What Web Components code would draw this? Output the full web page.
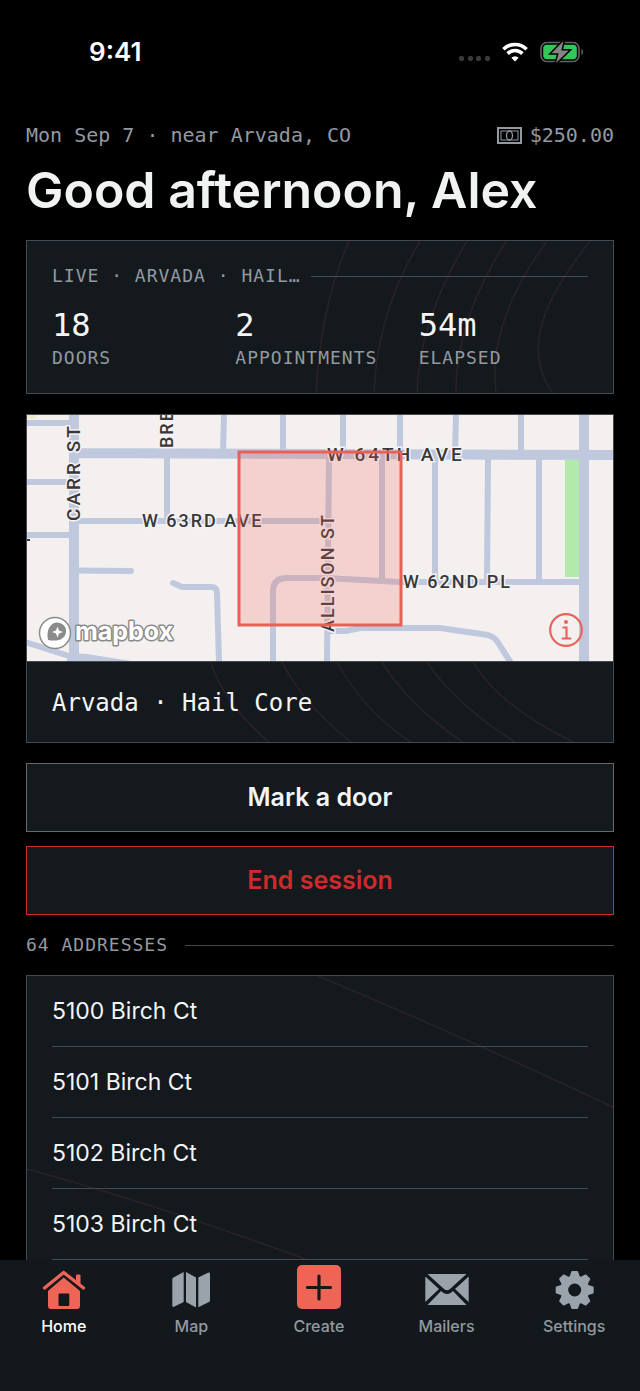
<!DOCTYPE html>
<html lang="en">
<head>
<meta charset="utf-8">
<meta name="viewport" content="width=device-width, initial-scale=1">
<title>Home</title>
<style>
    :root {
        --bg: #000;
        --panel: #14191d;
        --line: #434b50;
        --contour: #2b2226;
        --fg: #f3f5f6;
        --muted: #9299a0;
        --accent: #ee6558;
        --danger: #cd2b2b;
        --sans: Inter, "Liberation Sans", sans-serif;
        --mono: "DejaVu Sans Mono", "Liberation Mono", monospace;
    }

    body {
        margin: 0;
        background: var(--bg);
        color: var(--fg);
        font-family: var(--sans);
    }
</style>
</head>
<body>
<field-app></field-app>

<script>
class StatusBar extends HTMLElement {
    constructor() {
        super();
        this.attachShadow({ mode: 'open' });
        this.shadowRoot.innerHTML = `
            <style>
                :host {
                    display: flex;
                    align-items: center;
                    justify-content: space-between;
                    height: 104px;
                    padding: 0 56px 0 89px;
                    color: #fff;
                }
                time { font-size: 26px; line-height: 32px; font-weight: 600; }
                .icons { display: flex; align-items: center; gap: 12px; }
                svg { display: block; }
            </style>
            <time>${this.getAttribute('time')}</time>
            <div class="icons">
                <svg width="31" height="22" viewBox="0 0 31 22" fill="#3b3b3c">
                    <rect x="0" y="15" width="5" height="5" rx="2"/>
                    <rect x="9" y="15" width="5" height="5" rx="2"/>
                    <rect x="17" y="15" width="5" height="5" rx="2"/>
                    <rect x="26" y="15" width="5" height="5" rx="2"/>
                </svg>
                <svg width="26" height="22" viewBox="0 0 26 22" fill="none" stroke="#fff" stroke-width="3.6">
                    <path d="M1.4 8.2a16.5 16.5 0 0 1 23.2 0"/>
                    <path d="M5.6 12.6a10.5 10.5 0 0 1 14.8 0"/>
                    <path d="M13 20.6l-3.7-3.8a5.2 5.2 0 0 1 7.4 0z" fill="#fff" stroke="none"/>
                </svg>
                <svg width="44" height="22" viewBox="0 0 44 22">
                    <rect x="1" y="1.5" width="38" height="19" rx="6" fill="none" stroke="#626365" stroke-width="1.6"/>
                    <path d="M41.5 8c2 .6 2 5.4 0 6z" fill="#626365"/>
                    <rect x="3.2" y="3.8" width="33.6" height="14.4" rx="3.6" fill="#33c759"/>
                    <path d="M23.5 0L11.5 12.2h7.2L16 22l12.8-12.4h-7.5z" fill="#858587" stroke="#000" stroke-width="3" paint-order="stroke"/>
                </svg>
            </div>
        `;
    }
}

class PageGreeting extends HTMLElement {
    constructor() {
        super();
        this.attachShadow({ mode: 'open' });
        this.shadowRoot.innerHTML = `
            <style>
                :host { display: block; }
                .meta {
                    display: flex;
                    justify-content: space-between;
                    font: 20px/24px var(--mono);
                    color: var(--muted);
                }
                .balance { display: flex; align-items: center; gap: 8px; }
                h1 { margin: 11px 0 0; font-size: 50px; line-height: 64px; font-weight: 600; color: #f1f2f2; }
            </style>
            <div class="meta">
                <slot name="where"></slot>
                <span class="balance">
                    <svg width="25" height="17" viewBox="0 0 25 17" fill="none" stroke="currentColor">
                        <rect x="1" y="1" width="23" height="15" stroke-width="2"/>
                        <rect x="4" y="4" width="17" height="9" stroke-width="1"/>
                        <ellipse cx="12.5" cy="8.5" rx="3" ry="4.5" stroke-width="1.3"/>
                    </svg>
                    <slot name="balance"></slot>
                </span>
            </div>
            <h1><slot></slot></h1>
        `;
    }
}

// Monospace caption followed by a hairline
class RuleLabel extends HTMLElement {
    constructor() {
        super();
        this.attachShadow({ mode: 'open' });
        this.shadowRoot.innerHTML = `
            <style>
                :host {
                    display: flex;
                    align-items: center;
                    gap: var(--rule-gap, 10px);
                    font: 18px/20px var(--mono);
                    letter-spacing: 1px;
                    color: var(--muted);
                    white-space: nowrap;
                }
                :host::after { content: ""; flex: 1; height: 1px; background: var(--line); }
            </style>
            <slot></slot>
        `;
    }
}

class StatItem extends HTMLElement {
    constructor() {
        super();
        this.attachShadow({ mode: 'open' });
        this.shadowRoot.innerHTML = `
            <style>
                :host { display: flex; flex-direction: column; font-family: var(--mono); }
                b { font-size: 32px; line-height: 40px; font-weight: 400; }
                span { font-size: 18px; line-height: 26px; letter-spacing: 1px; color: var(--muted); }
            </style>
            <b>${this.getAttribute('value')}</b>
            <span><slot></slot></span>
        `;
    }
}

// Bordered card with faint contour lines behind its content
const CONTOURS = {
    stats: {
        box: '0 0 586 152',
        d: 'M322 0Q294 64 289 152M393 0Q350 72 347 152M440 0Q392 80 390 152M479 0Q428 82 429 152M520 0Q460 82 469 152M563 0C522 52 492 106 526 152'
    },
    place: {
        box: '0 0 586 80',
        d: 'M183 0Q200 45 242 80M255 0Q276 42 324 80M310 0Q336 48 383 80M355 0Q382 44 436 80M400 0Q428 42 488 80M446 0Q472 44 546 80'
    },
    list: {
        box: '0 0 586 284',
        d: 'M291 0Q430 58 586 131M0 193Q134 230 281 284'
    }
};

class ContourCard extends HTMLElement {
    constructor() {
        super();
        this.attachShadow({ mode: 'open' });
        const lines = CONTOURS[this.getAttribute('lines')];
        this.shadowRoot.innerHTML = `
            <style>
                :host { display: block; background: var(--panel); border: 1px solid var(--line); }
                .body { display: grid; }
                .body > * { grid-area: 1 / 1; min-width: 0; }
                svg { width: 100%; height: 100%; }
                path { fill: none; stroke: var(--contour); stroke-width: 1.5; }
                .content { z-index: 1; }
            </style>
            <slot name="media"></slot>
            <div class="body">
                <svg viewBox="${lines.box}" preserveAspectRatio="none" aria-hidden="true"><path d="${lines.d}"/></svg>
                <div class="content"><slot></slot></div>
            </div>
        `;
    }
}

class StreetMap extends HTMLElement {
    constructor() {
        super();
        this.attachShadow({ mode: 'open' });
        this.shadowRoot.innerHTML = `
            <style>
                :host { display: block; position: relative; border-bottom: 1px solid var(--line); background: #f3f0ef; }
                .streets { display: block; width: 100%; }
                .road { fill: none; stroke: #bfc8dc; stroke-width: 6; stroke-linejoin: round; }
                .main { stroke-width: 10; }
                text { font-family: Roboto, sans-serif; font-size: 18px; font-weight: 500; letter-spacing: 2px; fill: #38383a; stroke: #f5f3f3; stroke-width: 3px; paint-order: stroke; }
                .major { font-size: 19px; letter-spacing: 3px; }
                .logo, button { position: absolute; bottom: 14px; }
                .logo { left: 11px; bottom: 8px; }
                .logo svg, button svg { display: block; }
                .logo text { font-family: Inter, sans-serif; font-size: 25px; font-weight: 700; letter-spacing: 0; fill: #fff; stroke: #8b8b8b; stroke-width: 3px; stroke-linejoin: round; }
                button { right: 30px; padding: 0; border: 0; background: none; }
            </style>
            <svg class="streets" viewBox="0 0 586 246" role="img" aria-label="Map of the session area">
                <rect x="538" y="45" width="14" height="117" fill="#b1eaab"/>
                <path fill="#f0eccb" d="M0 0h9v4H0z"/>
                <g class="road">
                    <path d="M0 8h46M0 67h46M0 120h46M140 38v68M197 0l-1 38M256 0v38M46 106h255"/>
                    <path d="M46 155.5L104 156M146 168l9 4h29q6 0 6 6l2 68" stroke-linecap="round"/>
                    <path d="M246 246v-70q0-13 14-13h38l75 4h179"/>
                    <path d="M302 43l-2 203M316 0v38M373 0v38M429 0l-1 38M494 0v38M355 43v124M408 43v124M461 43l-1 124M512 43v124"/>
                    <path d="M302 216h17l14-3h80l48 7q6 2 9 6l14 22"/>
                    <path d="M-2 227l47 15"/>
                    <path d="M40 238l20 1 44 7H40z" fill="#bfc8dc" stroke="none"/>
                </g>
                <g class="road main">
                    <path d="M47 0v246M46 38l254 1 286 1"/>
                    <path d="M557 0v246"/>
                </g>
                <g>
                    <text class="major" x="300" y="46">W 64TH AVE</text>
                    <text x="115" y="112">W 63RD AVE</text>
                    <text x="376" y="173">W 62ND PL</text>
                    <text class="major" transform="translate(53 106) rotate(-90)">CARR ST</text>
                    <text transform="translate(146 33) rotate(-90)">BRE</text>
                    <text transform="translate(307 217) rotate(-90)">ALLISON ST</text>
                    <path d="M0 125h3" stroke="#38383a" stroke-width="2"/>
                </g>
                <rect x="212" y="37" width="162" height="173" fill="#f2645a" fill-opacity=".22" stroke="#ea5f56" stroke-width="3"/>
            </svg>
            <div class="logo">
                <svg width="140" height="40" viewBox="0 0 140 40">
                    <circle cx="17" cy="20" r="15.5" fill="#fff" stroke="#8b8b8b" stroke-width="1.5"/>
                    <path d="M10 27c-1-6-.5-10.5 2-13.5a8.7 8.7 0 1 1 12 12c-3 2.3-8 2.5-14 1.5z" fill="#8b8b8b"/>
                    <path d="M19.5 13.5l1.5 4 4 1.5-4 1.5-1.5 4-1.5-4-4-1.5 4-1.5z" fill="#fff"/>
                    <text x="37" y="27">mapbox</text>
                </svg>
            </div>
            <button aria-label="Map information">
                <svg width="34" height="34" viewBox="0 0 34 34" fill="none" stroke="#e8645b" stroke-width="2.2">
                    <circle cx="17" cy="17" r="15.8"/>
                    <path d="M13.5 14.5H17.5V25.5M12.8 25.5h9.4"/>
                    <circle cx="17" cy="9" r="2" fill="#e8645b" stroke="none"/>
                </svg>
            </button>
        `;
    }
}

class ActionButton extends HTMLElement {
    constructor() {
        super();
        this.attachShadow({ mode: 'open' });
        this.shadowRoot.innerHTML = `
            <style>
                :host { display: block; }
                button {
                    display: block;
                    width: 100%;
                    padding: 18px;
                    border: 1px solid #626a6d;
                    background: var(--panel);
                    color: var(--fg);
                    font: 600 25px/31px var(--sans);
                }
                :host([danger]) button { border-color: var(--danger); color: var(--danger); }
            </style>
            <button><slot></slot></button>
        `;
    }
}

class AddressRow extends HTMLElement {
    constructor() {
        super();
        this.attachShadow({ mode: 'open' });
        this.shadowRoot.innerHTML = `
            <style>
                :host {
                    display: block;
                    padding: 19px 0;
                    border-bottom: 1px solid var(--line);
                    font-size: 23px;
                    line-height: 32px;
                }
            </style>
            <slot></slot>
        `;
    }
}

const TAB_ICONS = {
    home: `
        <path d="M34 18v-7.5q0-1 1-1h2.5q1 0 1 1V22z"/>
        <path d="M2.5 23L21.7 7.5 41.5 23" fill="none" stroke="currentColor" stroke-width="3.4" stroke-linecap="round" stroke-linejoin="round"/>
        <path fill-rule="evenodd" d="M21.7 12.5L38 26v15q0 3-3 3H9q-3 0-3-3V26zM17.5 28.5q-1 0-1 1V40q0 1 1 1h8.8q1 0 1-1V29.5q0-1-1-1z"/>`,
    map: `
        <path d="M14.7 7v30L5 41.8q-1.7.5-1.7-1.3V14.3q0-1.3 1.2-1.9z"/>
        <path d="M17 7l10 5.5v30L17 37z"/>
        <path d="M29.3 12.5L39.5 7.6q1.5-.5 1.5 1.2v26.5q0 1.2-1 1.7l-10.7 5.2z"/>`,
    create: `
        <rect width="44" height="44" rx="5"/>
        <path d="M22 11v23M10.5 22.5h23" fill="none" stroke="#14191d" stroke-width="3.2" stroke-linecap="round"/>`,
    mail: `
        <path d="M2.5 9h39L25 24q-3 2.5-6 0z"/>
        <path d="M.3 11.5L14 24 .3 37zM43.7 11.5L30 24l13.7 13z"/>
        <path d="M2.5 40L16 26l2.5 2q3.5 2 7 0l2.5-2 13.5 14z"/>`,
    gear: `
        <g transform="translate(22.7 25)" stroke="currentColor" stroke-linejoin="round">
            <circle r="10.5" fill="none" stroke-width="8"/>
            ${[0, 45, 90, 135, 180, 225, 270, 315].map(angle =>
                `<path transform="rotate(${angle})" stroke-width="2" d="M-4-13.5L-2.5-18h5L4-13.5z"/>`
            ).join('')}
        </g>`
};

class TabItem extends HTMLElement {
    constructor() {
        super();
        this.attachShadow({ mode: 'open' });
        this.shadowRoot.innerHTML = `
            <style>
                :host { display: block; flex: 1; color: var(--muted); }
                a {
                    display: flex;
                    flex-direction: column;
                    align-items: center;
                    gap: 7px;
                    color: inherit;
                    font-size: 16px;
                    line-height: 20px;
                    font-weight: 500;
                    text-decoration: none;
                }
                svg { display: block; color: #9aa2ab; fill: currentColor; }
                :host([accent]) svg { color: var(--accent); }
                :host([current]) { color: #fff; }
            </style>
            <a href="#${this.getAttribute('icon')}">
                <svg width="44" height="44" viewBox="0 0 44 44" aria-hidden="true">${TAB_ICONS[this.getAttribute('icon')]}</svg>
                <span><slot></slot></span>
            </a>
        `;
    }
}

class TabBar extends HTMLElement {
    constructor() {
        super();
        this.attachShadow({ mode: 'open' });
        this.shadowRoot.innerHTML = `
            <style>
                :host { display: block; position: sticky; bottom: 0; z-index: 2; background: #13181c; }
                nav { display: flex; padding: 5px 2px 56px 0; }
            </style>
            <nav><slot></slot></nav>
        `;
    }
}

class FieldApp extends HTMLElement {
    constructor() {
        super();
        this.attachShadow({ mode: 'open' });
        this.shadowRoot.innerHTML = `
            <style>
                :host { display: flex; flex-direction: column; min-height: 100vh; }
                main { flex: 1; display: flex; flex-direction: column; padding: 19px 26px 0; }
                .stats, .map { margin-bottom: 20px; }
                .stats { margin-top: 18px; }
                .live { padding: 25px 25px 22px; }
                .figures { display: grid; grid-template-columns: repeat(3, 1fr); gap: 14px; margin-top: 19px; }
                h2 { margin: 0; padding: 25px 25px 21px; font: 24px/32px var(--mono); }
                .actions { display: flex; flex-direction: column; gap: 14px; margin-bottom: 20px; }
                .count { --rule-gap: 17px; margin-bottom: 20px; }
                .list { flex: 1; border-bottom: 0; }
                .rows { padding: 0 25px; }
            </style>
            <status-bar time="9:41"></status-bar>
            <main>
                <page-greeting>
                    <span slot="where">Mon Sep 7 · near Arvada, CO</span>
                    <span slot="balance">$250.00</span>
                    Good afternoon, Alex
                </page-greeting>
                <contour-card class="stats" lines="stats">
                    <div class="live">
                        <rule-label>LIVE · ARVADA · HAIL…</rule-label>
                        <div class="figures">
                            <stat-item value="18">DOORS</stat-item>
                            <stat-item value="2">APPOINTMENTS</stat-item>
                            <stat-item value="54m">ELAPSED</stat-item>
                        </div>
                    </div>
                </contour-card>
                <contour-card class="map" lines="place">
                    <street-map slot="media"></street-map>
                    <h2>Arvada · Hail Core</h2>
                </contour-card>
                <div class="actions">
                    <action-button>Mark a door</action-button>
                    <action-button danger>End session</action-button>
                </div>
                <rule-label class="count">64 ADDRESSES</rule-label>
                <contour-card class="list" lines="list">
                    <div class="rows">
                        <address-row>5100 Birch Ct</address-row>
                        <address-row>5101 Birch Ct</address-row>
                        <address-row>5102 Birch Ct</address-row>
                        <address-row>5103 Birch Ct</address-row>
                    </div>
                </contour-card>
            </main>
            <tab-bar>
                <tab-item icon="home" accent current>Home</tab-item>
                <tab-item icon="map">Map</tab-item>
                <tab-item icon="create" accent>Create</tab-item>
                <tab-item icon="mail">Mailers</tab-item>
                <tab-item icon="gear">Settings</tab-item>
            </tab-bar>
        `;
    }
}

customElements.define('status-bar', StatusBar);
customElements.define('page-greeting', PageGreeting);
customElements.define('rule-label', RuleLabel);
customElements.define('stat-item', StatItem);
customElements.define('contour-card', ContourCard);
customElements.define('street-map', StreetMap);
customElements.define('action-button', ActionButton);
customElements.define('address-row', AddressRow);
customElements.define('tab-item', TabItem);
customElements.define('tab-bar', TabBar);
customElements.define('field-app', FieldApp);
</script>
</body>
</html>
